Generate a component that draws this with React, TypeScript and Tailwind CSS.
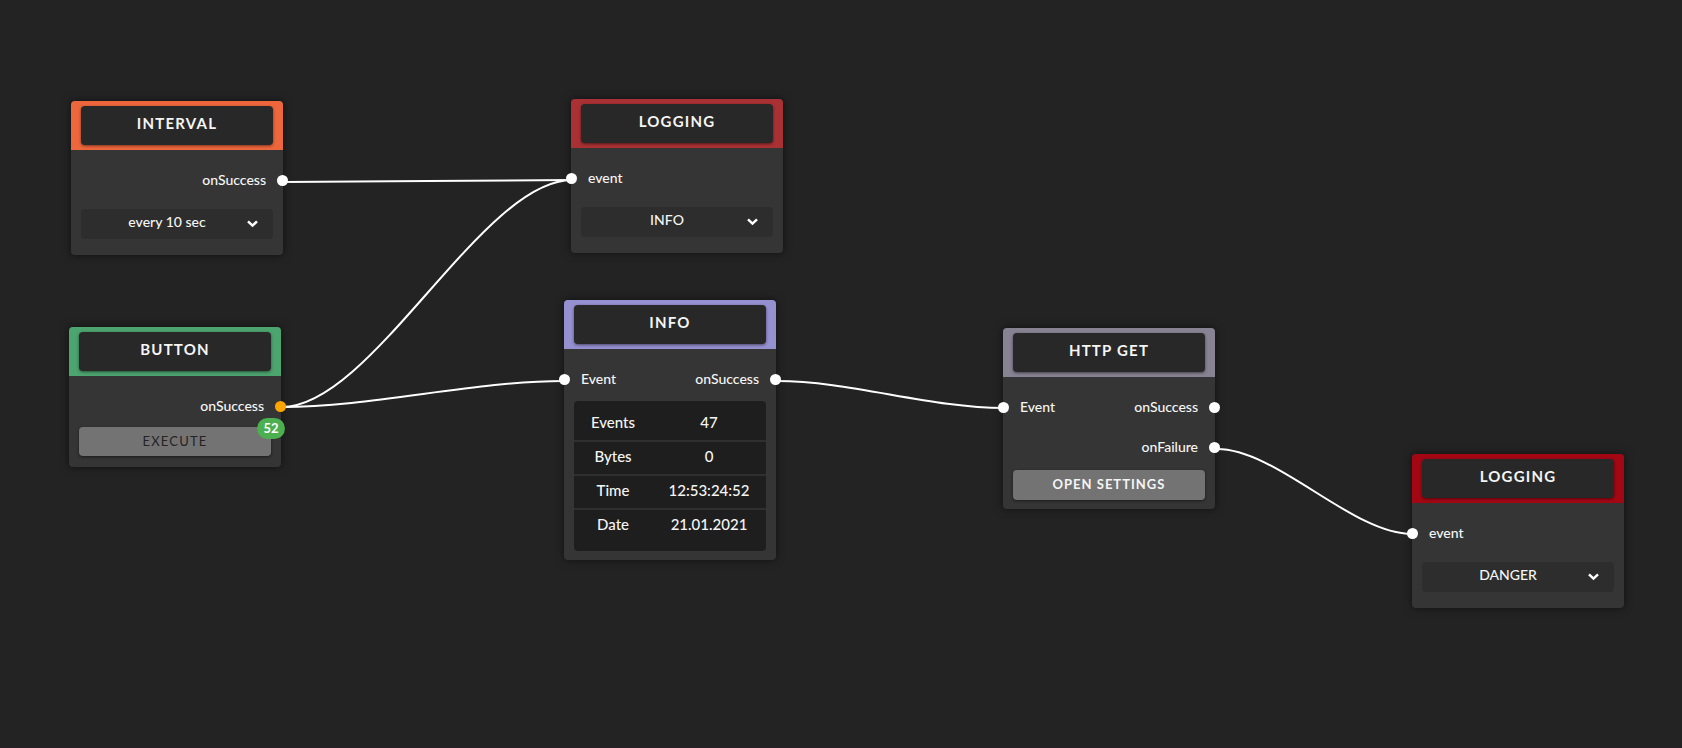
import { useState } from "react";
import type { ReactNode } from "react";

function Title({ children, color }: { children: ReactNode; color: string }) {
  return (
    <header className={`h-[49px] rounded-t px-[10px] pt-[5px] ${color}`}>
      <h2 className="flex h-[39px] items-center justify-center rounded bg-[#282828] pb-[5px] text-[15px] font-bold tracking-[1.2px] shadow-[0_1px_3px_rgba(0,0,0,0.5)]">
        {children}
      </h2>
    </header>
  );
}

function Node({ place, color, title, children }: { place: string; color: string; title: string; children: ReactNode }) {
  return (
    <section className={`absolute w-[212px] rounded bg-[#353535] shadow-[0_0_8px_rgba(0,0,0,0.55)] ${place}`}>
      <Title color={color}>{title}</Title>
      <div className="px-[10px] pt-[11px]">{children}</div>
    </section>
  );
}

function Ports({ input, output, active }: { input?: string; output?: string; active?: boolean }) {
  return (
    <div className="relative flex h-10 items-center justify-between px-[7px] pb-[3px] text-sm font-medium">
      <span>{input}</span>
      <span>{output}</span>
      {input && <i className="absolute top-[14px] -left-[15px] size-[11px] rounded-full bg-white" />}
      {output && <i className={`absolute top-[14px] -right-[15px] size-[11px] rounded-full ${active ? "bg-[#ffa500]" : "bg-white"}`} />}
    </div>
  );
}

function Choice({ label, options }: { label: string; options: string[] }) {
  const [value, setValue] = useState(options[0]);
  return (
    <div className="relative mt-2 mb-4">
      <select
        aria-label={label}
        value={value}
        onChange={(e) => setValue(e.target.value)}
        className="block h-[30px] w-full appearance-none rounded bg-[#2d2d2d] pr-5 pb-1 text-center text-sm font-medium"
      >
        {options.map((o) => (
          <option key={o}>{o}</option>
        ))}
      </select>
      <svg className="pointer-events-none absolute top-[11px] right-[15px]" width="11" height="8" viewBox="0 0 11 8" fill="none" stroke="white" strokeWidth="2.5">
        <path d="M1 1.3 L5.5 5.6 L10 1.3" />
      </svg>
    </div>
  );
}

const levels = ["INFO", "WARNING", "DANGER"];

const stats = [
  ["Events", "47"],
  ["Bytes", "0"],
  ["Time", "12:53:24:52"],
  ["Date", "21.01.2021"],
];

export default function App() {
  return (
    <main className="relative h-screen min-h-[640px] overflow-auto border-b border-[#2a2028] bg-[#232323] font-['Lato',sans-serif] text-[#f5f5f5]">
      <svg className="pointer-events-none absolute top-0 left-0" width="1682" height="640" fill="none" stroke="white" strokeWidth="2">
        <path d="M284 182 C384 182 472 180 572 180" />
        <path d="M282 407 C372 407 482 180 572 180" />
        <path d="M282 407 C372 407 474 381 564 381" />
        <path d="M777 381 C850 381 930 408 1004 408" />
        <path d="M1217 449 C1277 449 1352 534 1412 534" />
      </svg>

      <Node place="top-[101px] left-[71px]" color="bg-[#ee673c]" title="INTERVAL">
        <Ports output="onSuccess" />
        <Choice label="Interval" options={["every 10 sec", "every 30 sec", "every 60 sec"]} />
      </Node>

      <Node place="top-[327px] left-[69px]" color="bg-[#4ca46f]" title="BUTTON">
        <Ports output="onSuccess" active />
        <div className="relative pb-[11px]">
          <button className="block h-[29px] w-full rounded bg-[#737373] text-[13px] tracking-[1.2px] text-[#232323] shadow-[0_1px_3px_rgba(0,0,0,0.5)]">
            EXECUTE
          </button>
          <span className="absolute -top-[9px] -right-[14px] flex h-[21px] w-7 items-center justify-center rounded-full bg-[#4caf50] text-[13px] font-bold text-white">
            52
          </span>
        </div>
      </Node>

      <Node place="top-[99px] left-[571px]" color="bg-[#aa3133]" title="LOGGING">
        <Ports input="event" />
        <Choice label="Level" options={levels} />
      </Node>

      <Node place="top-[300px] left-[564px]" color="bg-[#9590d0]" title="INFO">
        <Ports input="Event" output="onSuccess" />
        <div className="mt-px mb-[9px] h-[150px] rounded bg-[#1e1e1e] pt-[7px]">
          <table className="w-full table-fixed border-separate border-spacing-0 text-center text-[15px]">
            <tbody>
              {stats.map(([name, value]) => (
                <tr key={name} className="group h-[34px]">
                  <th scope="row" className="w-[78px] border-b-2 border-[#2f2f2f] p-0 pb-[3px] font-medium group-last:border-transparent">{name}</th>
                  <td className="border-b-2 border-[#2f2f2f] p-0 pb-[3px] font-medium group-last:border-transparent">{value}</td>
                </tr>
              ))}
            </tbody>
          </table>
        </div>
      </Node>

      <Node place="top-[328px] left-[1003px]" color="bg-[#878393]" title="HTTP GET">
        <Ports input="Event" output="onSuccess" />
        <Ports output="onFailure" />
        <button className="mt-[2px] mb-[9px] block h-[30px] w-full rounded bg-[#737373] pb-px text-[13px] font-bold tracking-[1px] shadow-[0_1px_3px_rgba(0,0,0,0.5)]">
          OPEN SETTINGS
        </button>
      </Node>

      <Node place="top-[454px] left-[1412px]" color="bg-[#a30714]" title="LOGGING">
        <Ports input="event" />
        <Choice label="Level" options={["DANGER", "INFO", "WARNING"]} />
      </Node>
    </main>
  );
}
